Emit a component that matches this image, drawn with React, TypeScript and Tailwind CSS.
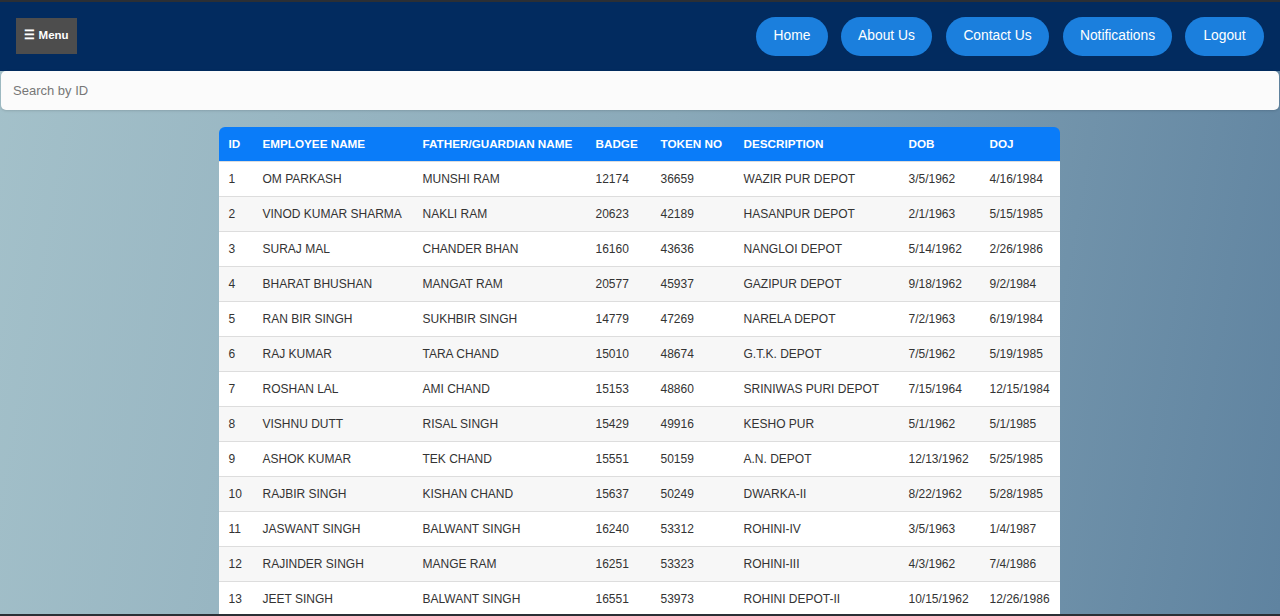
import React from "react";

const rows = [
  ["1", "OM PARKASH", "MUNSHI RAM", "12174", "36659", "WAZIR PUR DEPOT", "3/5/1962", "4/16/1984"],
  ["2", "VINOD KUMAR SHARMA", "NAKLI RAM", "20623", "42189", "HASANPUR DEPOT", "2/1/1963", "5/15/1985"],
  ["3", "SURAJ MAL", "CHANDER BHAN", "16160", "43636", "NANGLOI DEPOT", "5/14/1962", "2/26/1986"],
  ["4", "BHARAT BHUSHAN", "MANGAT RAM", "20577", "45937", "GAZIPUR DEPOT", "9/18/1962", "9/2/1984"],
  ["5", "RAN BIR SINGH", "SUKHBIR SINGH", "14779", "47269", "NARELA DEPOT", "7/2/1963", "6/19/1984"],
  ["6", "RAJ KUMAR", "TARA CHAND", "15010", "48674", "G.T.K. DEPOT", "7/5/1962", "5/19/1985"],
  ["7", "ROSHAN LAL", "AMI CHAND", "15153", "48860", "SRINIWAS PURI DEPOT", "7/15/1964", "12/15/1984"],
  ["8", "VISHNU DUTT", "RISAL SINGH", "15429", "49916", "KESHO PUR", "5/1/1962", "5/1/1985"],
  ["9", "ASHOK KUMAR", "TEK CHAND", "15551", "50159", "A.N. DEPOT", "12/13/1962", "5/25/1985"],
  ["10", "RAJBIR SINGH", "KISHAN CHAND", "15637", "50249", "DWARKA-II", "8/22/1962", "5/28/1985"],
  ["11", "JASWANT SINGH", "BALWANT SINGH", "16240", "53312", "ROHINI-IV", "3/5/1963", "1/4/1987"],
  ["12", "RAJINDER SINGH", "MANGE RAM", "16251", "53323", "ROHINI-III", "4/3/1962", "7/4/1986"],
  ["13", "JEET SINGH", "BALWANT SINGH", "16551", "53973", "ROHINI DEPOT-II", "10/15/1962", "12/26/1986"],
];

const headers = ["ID", "EMPLOYEE NAME", "FATHER/GUARDIAN NAME", "BADGE", "TOKEN NO", "DESCRIPTION", "DOB", "DOJ"];
const widths = [34, 160, 173, 65, 83, 165, 81, 80];

const navs: [string, number, string][] = [
  ["Home", 72, ""],
  ["About Us", 91, "ml-[13px]"],
  ["Contact Us", 103, "ml-[14px]"],
  ["Notifications", 109, "ml-[14px]"],
  ["Logout", 79, "ml-[13px]"],
];

export default function App() {
  return (
    <div
      className="w-[1280px] h-[616px] overflow-hidden flex flex-col border-t-2 border-b-2 border-[#2b2f35] bg-[linear-gradient(100deg,#a4c1ca_0%,#8aa9b9_50%,#5f83a0_100%)]"
      style={{ fontFamily: '"Liberation Sans", Arial, sans-serif' }}
    >
      <header className="h-[69px] shrink-0 bg-[#022b5f] flex items-center justify-between pl-4 pr-4">
        <button className="h-[36px] w-[61px] mt-[-1px] bg-[#4d4d4d] text-white text-[11.5px] font-bold flex items-center justify-center">
          ☰ Menu
        </button>
        <nav className="flex items-center">
          {navs.map(([t, w, m]) => (
            <button
              key={t}
              className={`h-[39px] rounded-full bg-[#1b7fdd] text-white text-[13.8px] flex items-center justify-center ${m}`}
              style={{ width: w }}
            >
              {t}
            </button>
          ))}
        </nav>
      </header>
      <div className="px-px">
        <div className="h-[39px] bg-[#fbfbfb] rounded-[5px] flex items-center pl-3 text-[13px] text-[#777] shadow-sm">
          Search by ID
        </div>
      </div>
      <div className="flex justify-center pt-[17px] pr-[1px]">
        <table className="w-[841px] table-fixed border-collapse text-[12px] text-[#333] ml-[-1px]">
          <colgroup>
            {widths.map((w, i) => (
              <col key={i} style={{ width: w }} />
            ))}
          </colgroup>
          <thead>
            <tr className="h-[34px] bg-[#0a7cf9]">
              {headers.map((h, i) => (
                <th
                  key={h}
                  className={`text-left text-white font-bold text-[11.7px] pl-[10px] ${i === 0 ? "rounded-tl-[6px]" : ""} ${i === headers.length - 1 ? "rounded-tr-[6px]" : ""}`}
                >
                  {h}
                </th>
              ))}
            </tr>
          </thead>
          <tbody>
            {rows.map((r, ri) => (
              <tr key={ri} className={`h-[35px] border-t border-[#dddddd] ${ri % 2 === 1 ? "bg-[#f7f7f7]" : "bg-white"}`}>
                {r.map((c, ci) => (
                  <td key={ci} className="pl-[10px] pt-[1px] whitespace-nowrap">
                    {c}
                  </td>
                ))}
              </tr>
            ))}
          </tbody>
        </table>
      </div>
    </div>
  );
}
